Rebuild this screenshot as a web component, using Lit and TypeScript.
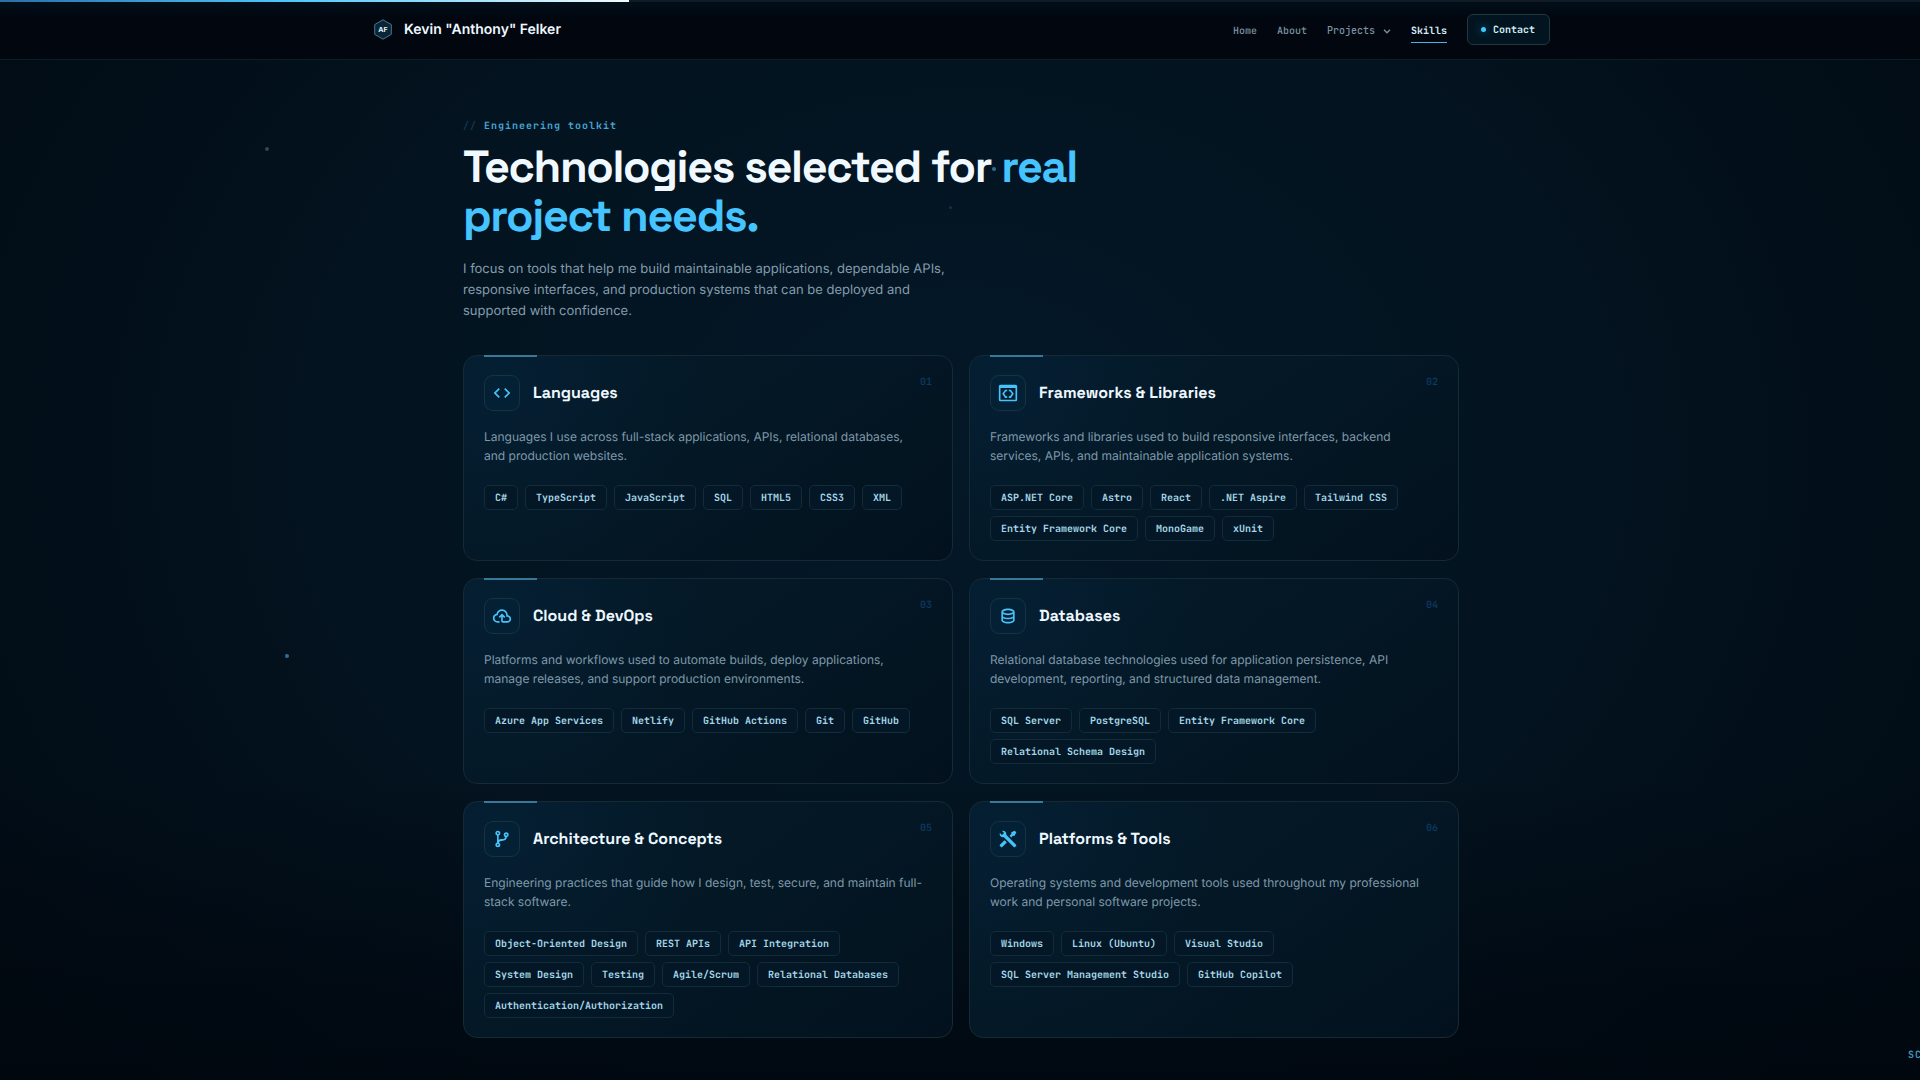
import { LitElement, html, css, svg } from "lit";
import { customElement, property } from "lit/decorators.js";

interface SkillGroup {
  title: string;
  icon: string;
  text: string;
  skills: string[];
}

const ICONS: Record<string, string> = {
  code: "M9.4 16.6L4.8 12l4.6-4.6L8 6l-6 6l6 6zm5.2 0l4.6-4.6l-4.6-4.6L16 6l6 6l-6 6z",
  window:
    "M21 2H3a2 2 0 0 0-2 2v16a2 2 0 0 0 2 2h18a2 2 0 0 0 2-2V4a2 2 0 0 0-2-2m0 18H3V6h18zM11 8v2H9.6L7.4 13l2.2 3H11v2H8.6L5 13l3.6-5zm2 0v2h1.4l2.2 3l-2.2 3H13v2h2.4L19 13l-3.6-5z",
  cloud:
    "M6.5 20q-2.28 0-3.89-1.57Q1 16.85 1 14.58q0-1.95 1.17-3.48q1.18-1.53 3.08-1.95q.63-2.3 2.5-3.72Q9.63 4 12 4q2.93 0 4.96 2.04Q19 8.07 19 11q1.73.2 2.86 1.5q1.14 1.28 1.14 3q0 1.88-1.31 3.19T18.5 20H13q-.82 0-1.41-.59Q11 18.83 11 18v-5.15L9.4 14.4L8 13l4-4l4 4l-1.4 1.4l-1.6-1.55V18h5.5q1.05 0 1.77-.73q.73-.72.73-1.77t-.73-1.77Q19.55 13 18.5 13H17v-2q0-2.07-1.46-3.54Q14.08 6 12 6Q9.93 6 8.46 7.46Q7 8.93 7 11h-.5q-1.45 0-2.47 1.03Q3 13.05 3 14.5T4.03 17q1.02 1 2.47 1H9v2z",
  database:
    "M12 3C7.58 3 4 4.79 4 7v10c0 2.21 3.59 4 8 4s8-1.79 8-4V7c0-2.21-3.58-4-8-4m6 14c0 .5-2.13 2-6 2s-6-1.5-6-2v-2.23c1.61.78 3.72 1.23 6 1.23s4.39-.45 6-1.23zm0-4.55c-1.3.95-3.58 1.55-6 1.55s-4.7-.6-6-1.55V9.64c1.47.83 3.61 1.36 6 1.36s4.53-.53 6-1.36zM12 9C8.13 9 6 7.5 6 7s2.13-2 6-2s6 1.5 6 2s-2.13 2-6 2",
  branch:
    "M13 14c-3.36 0-4.46 1.35-4.82 2.24C9.25 16.7 10 17.76 10 19a3 3 0 0 1-3 3a3 3 0 0 1-3-3c0-1.31.83-2.42 2-2.83V7.83A2.99 2.99 0 0 1 4 5a3 3 0 0 1 3-3a3 3 0 0 1 3 3c0 1.31-.83 2.42-2 2.83v5.29c.88-.65 2.16-1.12 4-1.12c2.67 0 3.56-1.34 3.85-2.23A3.006 3.006 0 0 1 14 7a3 3 0 0 1 3-3a3 3 0 0 1 3 3c0 1.34-.88 2.5-2.09 2.86C17.65 11.29 16.68 14 13 14m-6 4a1 1 0 0 0-1 1a1 1 0 0 0 1 1a1 1 0 0 0 1-1a1 1 0 0 0-1-1M7 4a1 1 0 0 0-1 1a1 1 0 0 0 1 1a1 1 0 0 0 1-1a1 1 0 0 0-1-1m10 2a1 1 0 0 0-1 1a1 1 0 0 0 1 1a1 1 0 0 0 1-1a1 1 0 0 0-1-1",
  tools:
    "m21.71 20.29l-1.42 1.42a1 1 0 0 1-1.41 0L7 9.85A3.81 3.81 0 0 1 6 10a4 4 0 0 1-3.78-5.3l2.54 2.54l.53-.53l1.42-1.42l.53-.53L4.7 2.22A4 4 0 0 1 10 6a3.81 3.81 0 0 1-.15 1l11.86 11.88a1 1 0 0 1 0 1.41M2.29 18.88a1 1 0 0 0 0 1.41l1.42 1.42a1 1 0 0 0 1.41 0l5.47-5.46l-2.83-2.83M20 2l-4 2v2l-2.17 2.17l2 2L18 8h2l2-4z",
};

const GROUPS: SkillGroup[] = [
  {
    title: "Languages",
    icon: "code",
    text: "Languages I use across full-stack applications, APIs, relational databases, and production websites.",
    skills: ["C#", "TypeScript", "JavaScript", "SQL", "HTML5", "CSS3", "XML"],
  },
  {
    title: "Frameworks & Libraries",
    icon: "window",
    text: "Frameworks and libraries used to build responsive interfaces, backend services, APIs, and maintainable application systems.",
    skills: ["ASP.NET Core", "Astro", "React", ".NET Aspire", "Tailwind CSS", "Entity Framework Core", "MonoGame", "xUnit"],
  },
  {
    title: "Cloud & DevOps",
    icon: "cloud",
    text: "Platforms and workflows used to automate builds, deploy applications, manage releases, and support production environments.",
    skills: ["Azure App Services", "Netlify", "GitHub Actions", "Git", "GitHub"],
  },
  {
    title: "Databases",
    icon: "database",
    text: "Relational database technologies used for application persistence, API development, reporting, and structured data management.",
    skills: ["SQL Server", "PostgreSQL", "Entity Framework Core", "Relational Schema Design"],
  },
  {
    title: "Architecture & Concepts",
    icon: "branch",
    text: "Engineering practices that guide how I design, test, secure, and maintain full-stack software.",
    skills: [
      "Object-Oriented Design",
      "REST APIs",
      "API Integration",
      "System Design",
      "Testing",
      "Agile/Scrum",
      "Relational Databases",
      "Authentication/Authorization",
    ],
  },
  {
    title: "Platforms & Tools",
    icon: "tools",
    text: "Operating systems and development tools used throughout my professional work and personal software projects.",
    skills: ["Windows", "Linux (Ubuntu)", "Visual Studio", "SQL Server Management Studio", "GitHub Copilot"],
  },
];

@customElement("skill-card")
export class SkillCard extends LitElement {
  @property({ attribute: false }) group!: SkillGroup;
  @property({ type: Number }) index = 1;

  static styles = css`
    :host {
      display: block;
    }
    .card {
      position: relative;
      box-sizing: border-box;
      height: 100%;
      padding: 19px 20px;
      border: 1px solid #142a35;
      border-radius: 14px;
      background:
        radial-gradient(circle at 8% 12%, rgba(8, 52, 92, 0.2), transparent 42%),
        linear-gradient(145deg, #041a29, #041724 55%, #03111e);
    }
    .card::before {
      content: "";
      position: absolute;
      top: -1px;
      left: 20px;
      width: 53px;
      height: 2px;
      background: #3a7899;
    }
    .head {
      display: flex;
      align-items: center;
      gap: 13px;
    }
    .icon {
      display: grid;
      place-items: center;
      box-sizing: border-box;
      width: 36px;
      height: 36px;
      border: 1px solid #153341;
      border-radius: 9px;
      background: #042034;
      color: #48c3fa;
    }
    .icon svg {
      width: 20px;
      height: 20px;
      fill: currentColor;
    }
    h2 {
      flex: 1;
      margin: 0;
      color: #eef8ff;
      font: 700 16px/26px "Space Grotesk", Inter, sans-serif;
    }
    .number {
      align-self: flex-start;
      color: #0c3a63;
      font: 500 10px/14px "JetBrains Mono", "DejaVu Sans Mono", monospace;
    }
    p {
      max-width: 442px;
      margin: 16px 0 20px;
      color: #7f99aa;
      font: 12px/19px Inter, sans-serif;
    }
    ul {
      display: flex;
      flex-wrap: wrap;
      gap: 6px 7px;
      margin: 0;
      padding: 0;
      list-style: none;
    }
    li {
      padding: 0 10px;
      border: 1px solid #122c39;
      border-radius: 5px;
      background: #031727;
      color: #a5d6e6;
      font: bold 10px/23px "JetBrains Mono", "DejaVu Sans Mono", monospace;
    }
  `;

  render() {
    const { title, icon, text, skills } = this.group;
    return html`
      <article class="card">
        <div class="head">
          <span class="icon">
            <svg viewBox="0 0 24 24" aria-hidden="true">${svg`<path fill-rule="evenodd" d=${ICONS[icon]}></path>`}</svg>
          </span>
          <h2>${title}</h2>
          <span class="number">${String(this.index).padStart(2, "0")}</span>
        </div>
        <p>${text}</p>
        <ul>
          ${skills.map((skill) => html`<li>${skill}</li>`)}
        </ul>
      </article>
    `;
  }
}

@customElement("site-header")
export class SiteHeader extends LitElement {
  static styles = css`
    :host {
      display: block;
    }
    .progress {
      height: 2px;
      background: #101b26;
    }
    .progress span {
      display: block;
      width: 629px;
      height: 2px;
      background: linear-gradient(90deg, #2b6ea8, #4cc6fb 45%, #f2fcff);
    }
    .bar {
      border-bottom: 1px solid #0e1e28;
      background: linear-gradient(#010f19, #01060f 30%);
    }
    .inner {
      display: flex;
      align-items: center;
      justify-content: space-between;
      box-sizing: border-box;
      max-width: 1180px;
      height: 57px;
      margin: 0 auto;
      padding: 0 0 2px 4px;
    }
    .brand {
      display: flex;
      align-items: center;
      gap: 12px;
      color: #eef8ff;
      font: 600 14px/20px Inter, sans-serif;
      text-decoration: none;
    }
    .brand svg {
      width: 18px;
      height: 21px;
    }
    nav {
      display: flex;
      align-items: center;
      gap: 20px;
    }
    .link {
      display: flex;
      align-items: center;
      gap: 8px;
      padding: 7px 0 3px;
      border: 0;
      border-bottom: 1px solid transparent;
      background: none;
      color: #7c93a2;
      font: 500 10px/16px "JetBrains Mono", "DejaVu Sans Mono", monospace;
      text-decoration: none;
    }
    .link svg {
      width: 8px;
      height: 5px;
    }
    .current {
      border-bottom-color: #48b4e4;
      color: #d8edf5;
      font-weight: bold;
    }
    .contact {
      display: flex;
      align-items: center;
      gap: 7px;
      padding: 0 14px 0 13px;
      border: 1px solid #213843;
      border-radius: 6px;
      background: #021420;
      color: #d3edf5;
      font: bold 10px/29px "JetBrains Mono", "DejaVu Sans Mono", monospace;
      text-decoration: none;
    }
    .contact::before {
      content: "";
      width: 5px;
      height: 5px;
      border-radius: 50%;
      background: #45c6ff;
      box-shadow: 0 0 9px #1382b5;
    }
  `;

  render() {
    return html`
      <header>
        <div class="progress"><span></span></div>
        <div class="bar">
          <div class="inner">
            <a class="brand" href="#home">
              <svg viewBox="0 0 18 21" aria-hidden="true">
                <path d="M9 .8 17.3 5.6v9.8L9 20.2.7 15.4V5.6z" fill="#0a2536" stroke="#47778d"></path>
                <text x="9" y="13" text-anchor="middle" font-family="Inter, sans-serif" font-size="7" font-weight="700" fill="#e4f8ff">AF</text>
              </svg>
              Kevin "Anthony" Felker
            </a>
            <nav>
              <a class="link" href="#home">Home</a>
              <a class="link" href="#about">About</a>
              <button class="link" type="button">
                Projects
                <svg viewBox="0 0 8 5" fill="none" stroke="currentColor" stroke-width="1.3" aria-hidden="true"><path d="m1 .8 3 3 3-3"></path></svg>
              </button>
              <a class="link current" href="#skills">Skills</a>
              <a class="contact" href="#contact">Contact</a>
            </nav>
          </div>
        </div>
      </header>
    `;
  }
}

@customElement("app-root")
export class AppRoot extends LitElement {
  static styles = css`
    :host {
      position: relative;
      display: block;
      min-height: 100vh;
      overflow: hidden;
      text-rendering: geometricPrecision;
      background:
        linear-gradient(transparent 72%, rgba(0, 6, 14, 0.75)),
        radial-gradient(ellipse 60% 84% at 50% 42%, #041828, #03131f 55%, #010b14);
    }
    main {
      max-width: 996px;
      margin: 0 auto;
      padding: 58px 0 42px 2px;
    }
    .eyebrow {
      margin: 0 0 9px;
      color: #45a6d4;
      font: 600 10px/16px "JetBrains Mono", "DejaVu Sans Mono", monospace;
      letter-spacing: 1px;
    }
    .eyebrow span {
      color: #0c3654;
    }
    h1 {
      max-width: 720px;
      margin: 0;
      color: #f0f9ff;
      font: 700 45px/49px "Space Grotesk", Inter, sans-serif;
      letter-spacing: -0.03em;
    }
    h1 em {
      color: #45c4ff;
      font-style: normal;
    }
    .lead {
      max-width: 500px;
      margin: 18px 0 33px;
      color: #839cac;
      font: 13px/21px Inter, sans-serif;
    }
    .grid {
      display: grid;
      grid-template-columns: repeat(2, minmax(0, 1fr));
      gap: 17px 16px;
    }
    .dot {
      position: absolute;
      width: 4px;
      height: 4px;
      border-radius: 50%;
      background: #2f6f96;
    }
    .dot-a {
      top: 147px;
      left: 265px;
      background: #2f4654;
    }
    .dot-b {
      top: 654px;
      left: 285px;
    }
    .dot-c {
      top: 167px;
      left: 992px;
    }
    .dot-d {
      top: 206px;
      left: 949px;
      width: 3px;
      height: 3px;
      background: #123349;
    }
    .side {
      position: absolute;
      top: 1047px;
      left: calc(100% - 12px);
      color: #3f93bd;
      font: 600 10px/16px "JetBrains Mono", "DejaVu Sans Mono", monospace;
      letter-spacing: 1px;
    }
  `;

  render() {
    return html`
      <site-header></site-header>
      <main>
        <p class="eyebrow"><span>//</span> Engineering toolkit</p>
        <h1>Technologies selected for <em>real project needs.</em></h1>
        <p class="lead">
          I focus on tools that help me build maintainable applications, dependable APIs, responsive interfaces, and
          production systems that can be deployed and supported with confidence.
        </p>
        <section class="grid">
          ${GROUPS.map((group, i) => html`<skill-card .group=${group} .index=${i + 1}></skill-card>`)}
        </section>
      </main>
      <i class="dot dot-a"></i>
      <i class="dot dot-b"></i>
      <i class="dot dot-c"></i>
      <i class="dot dot-d"></i>
      <span class="side">SC</span>
    `;
  }
}
